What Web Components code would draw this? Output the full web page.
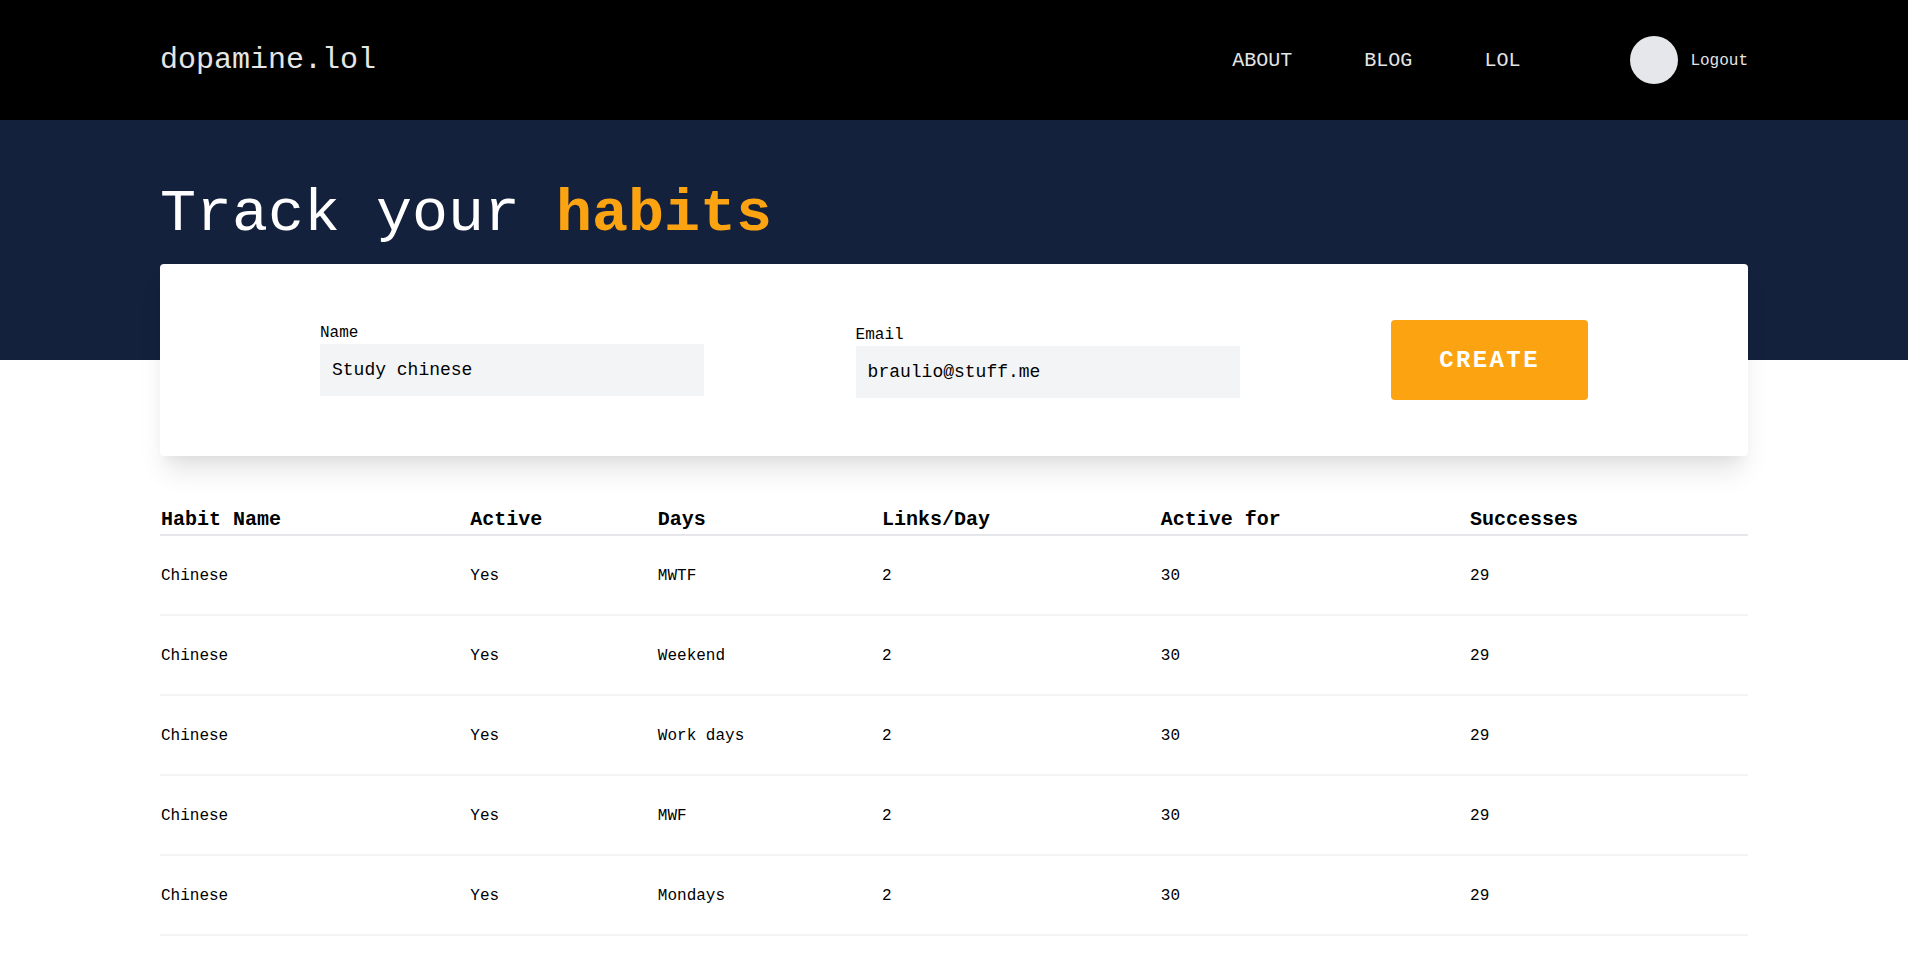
<!DOCTYPE html>
<html lang="en">
<head>
<meta charset="utf-8">
<meta name="viewport" content="width=device-width, initial-scale=1">
<title>dopamine.lol</title>
<style>
  :root {
    --navy: #14213d;
    --orange: #fca311;
    --platinum: #e5e5e5;
    --gray-100: #f3f4f6;
    --gray-200: #e5e7eb;
    --gutter: 160px;
  }
  @media (max-width: 1500px) { :root { --gutter: 48px; } }
  @media (max-width: 700px) { :root { --gutter: 16px; } }
  body {
    margin: 0;
    background: #fff;
    color: #000;
    font-family: "Liberation Mono", "Courier New", monospace;
    font-size: 16px;
    line-height: 24px;
  }
</style>
</head>
<body>
<habit-app></habit-app>

<template id="habit-app">
  <style>
    :host { display: block; }
    main { padding: 0 var(--gutter) 32px; }
    strong { color: var(--orange); font-weight: 700; }
    create-card { margin-top: -96px; }
    habit-table { margin-top: 48px; }
    .top { align-self: flex-start; }
  </style>
  <site-header>
    <nav-link href="#about">ABOUT</nav-link>
    <nav-link href="#blog">BLOG</nav-link>
    <nav-link href="#lol">LOL</nav-link>
    <user-menu slot="user">Logout</user-menu>
  </site-header>
  <hero-banner>Track your <strong>habits</strong></hero-banner>
  <main>
    <create-card>
      <text-field class="top" label="Name" type="text" value="Study chinese"></text-field>
      <text-field label="Email" type="email" value="braulio@stuff.me"></text-field>
      <action-button>CREATE</action-button>
    </create-card>
    <habit-table></habit-table>
  </main>
</template>

<template id="site-header">
  <style>
    :host { display: block; background: #000; color: var(--platinum); }
    header {
      display: flex; flex-wrap: wrap; align-items: center; justify-content: space-between;
      gap: 16px 48px; min-height: 120px; padding: 0 var(--gutter);
    }
    .logo { color: inherit; text-decoration: none; font-size: 30px; line-height: 36px; }
    .right { display: flex; flex-wrap: wrap; align-items: center; gap: 16px 110px; }
    nav { display: flex; gap: 72px; }
    @media (max-width: 1200px) { .right { column-gap: 48px; } nav { gap: 24px; } }
  </style>
  <header>
    <a class="logo" href="#home">dopamine.lol</a>
    <div class="right">
      <nav><slot></slot></nav>
      <slot name="user"></slot>
    </div>
  </header>
</template>

<template id="nav-link">
  <style>
    :host { display: block; padding-top: 2px; font-size: 20px; line-height: 26px; }
    a { color: inherit; text-decoration: none; }
  </style>
  <a><slot></slot></a>
</template>

<template id="user-menu">
  <style>
    :host { display: flex; align-items: center; gap: 12px; }
    .avatar { width: 48px; height: 48px; border-radius: 50%; background: var(--gray-200); }
    a { padding-top: 2px; color: inherit; text-decoration: none; }
  </style>
  <span class="avatar"></span>
  <a href="#logout"><slot></slot></a>
</template>

<template id="hero-banner">
  <style>
    :host { display: block; padding: 64px var(--gutter) 116px; background: var(--navy); color: #fff; }
    h1 { margin: 0; font-size: 60px; line-height: 60px; font-weight: 400; }
  </style>
  <h1><slot></slot></h1>
</template>

<template id="create-card">
  <style>
    :host {
      display: block; border-radius: 4px; background: #fff;
      box-shadow: 0 20px 25px -5px rgba(0, 0, 0, .1), 0 10px 10px -5px rgba(0, 0, 0, .04);
    }
    form {
      display: flex; flex-wrap: wrap; align-items: center; justify-content: space-between;
      gap: 24px; padding: 56px var(--gutter);
    }
  </style>
  <form><slot></slot></form>
</template>

<template id="text-field">
  <style>
    :host { display: block; width: 384px; max-width: 100%; }
    label { display: block; padding-top: 2px; line-height: 22px; }
    input {
      display: block; box-sizing: border-box; width: 100%; margin: 0; padding: 12px;
      border: 0; border-radius: 0; background: var(--gray-100); color: inherit;
      font-family: inherit; font-size: 18px; line-height: 28px; height: 52px;
    }
  </style>
  <label for="control"></label>
  <input id="control">
</template>

<template id="action-button">
  <style>
    :host { display: block; }
    button {
      display: block; margin: 0; padding: 26px 48px 24px; border: 0; border-radius: 4px;
      background: var(--orange); color: #fff; cursor: pointer;
      font-family: inherit; font-size: 24px; line-height: 30px; font-weight: 700; letter-spacing: .1em;
    }
  </style>
  <button type="button"><slot></slot></button>
</template>

<template id="habit-table">
  <style>
    :host { display: block; overflow-x: auto; }
    table { width: 100%; border-collapse: collapse; }
    th, td { padding: 2px 1px 0; text-align: left; }
    th { font-size: 20px; line-height: 28px; font-weight: 700; }
    thead tr { border-bottom: 2px solid var(--gray-200); }
    tbody tr { height: 80px; border-bottom: 2px solid var(--gray-100); }
  </style>
  <table>
    <thead><tr></tr></thead>
    <tbody></tbody>
  </table>
</template>

<script>
  class TemplateElement extends HTMLElement {
    constructor() {
      super();
      const template = document.getElementById(this.localName);
      this.attachShadow({ mode: "open" }).append(template.content.cloneNode(true));
    }
  }

  class NavLink extends TemplateElement {
    connectedCallback() {
      this.shadowRoot.querySelector("a").href = this.getAttribute("href");
    }
  }

  class TextField extends TemplateElement {
    connectedCallback() {
      const input = this.shadowRoot.querySelector("input");
      this.shadowRoot.querySelector("label").textContent = this.getAttribute("label");
      input.type = this.getAttribute("type");
      input.value = this.getAttribute("value");
    }
  }

  class HabitTable extends TemplateElement {
    static columns = ["Habit Name", "Active", "Days", "Links/Day", "Active for", "Successes"];
    static habits = ["MWTF", "Weekend", "Work days", "MWF", "Mondays"]
      .map(days => ["Chinese", "Yes", days, "2", "30", "29"]);

    connectedCallback() {
      const head = this.shadowRoot.querySelector("thead tr");
      const body = this.shadowRoot.querySelector("tbody");
      head.replaceChildren(...HabitTable.columns.map(name => {
        const th = document.createElement("th");
        th.scope = "col";
        th.textContent = name;
        return th;
      }));
      body.replaceChildren();
      for (const habit of HabitTable.habits) {
        const row = body.insertRow();
        for (const value of habit) row.insertCell().textContent = value;
      }
    }
  }

  customElements.define("nav-link", NavLink);
  customElements.define("user-menu", class extends TemplateElement {});
  customElements.define("site-header", class extends TemplateElement {});
  customElements.define("hero-banner", class extends TemplateElement {});
  customElements.define("text-field", TextField);
  customElements.define("action-button", class extends TemplateElement {});
  customElements.define("create-card", class extends TemplateElement {});
  customElements.define("habit-table", HabitTable);
  customElements.define("habit-app", class extends TemplateElement {});
</script>
</body>
</html>
